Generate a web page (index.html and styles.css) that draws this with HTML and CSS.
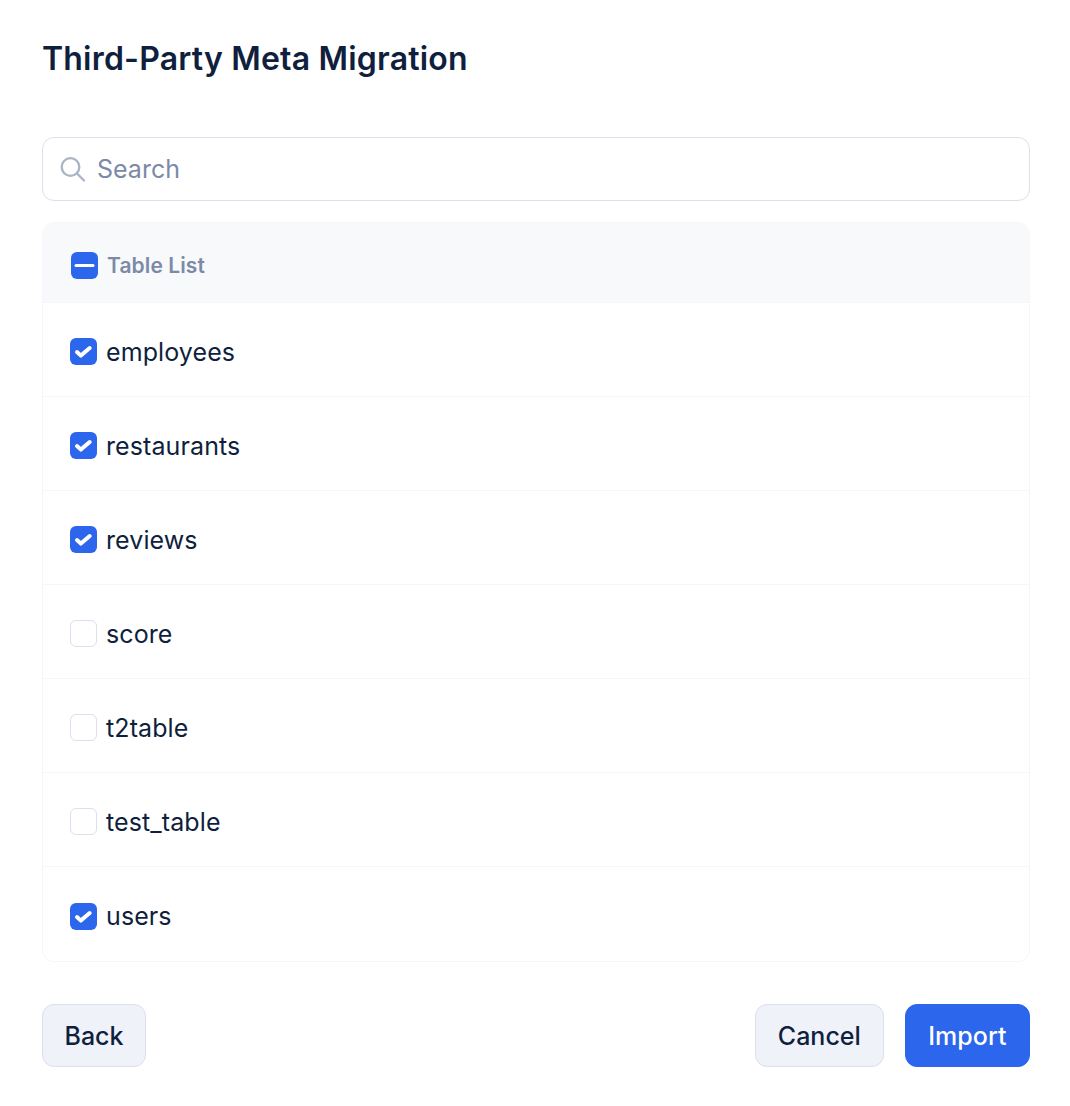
FILE: index.html
```html
<!DOCTYPE html>
<html lang="en">
<head>
  <meta charset="UTF-8">
  <title>Third-Party Meta Migration</title>
  <link rel="stylesheet" href="styles.css">
</head>
<body>
  <h1>Third-Party Meta Migration</h1>

  <label class="search">
    <svg class="search-icon" viewBox="0 0 25 25" width="25" height="25" fill="none" stroke="currentColor" stroke-width="2.3" stroke-linecap="round">
      <circle cx="10.5" cy="10" r="8.8"/>
      <path d="M17 16.5L24 23.5"/>
    </svg>
    <input type="text" placeholder="Search">
  </label>

  <div class="table">
    <div class="table-head">
      <span class="check on">
        <svg viewBox="0 0 27 27" width="27" height="27"><path d="M5 13.5h17" stroke="#fff" stroke-width="3" stroke-linecap="round"/></svg>
      </span>
      <span>Table List</span>
    </div>
    <div class="row">
      <span class="check on"><svg viewBox="0 0 27 27" width="27" height="27"><path d="M7 14l3.9 3.6 8.8-7.6" fill="none" stroke="#fff" stroke-width="4" stroke-linecap="round" stroke-linejoin="round"/></svg></span>
      <span>employees</span>
    </div>
    <div class="row">
      <span class="check on"><svg viewBox="0 0 27 27" width="27" height="27"><path d="M7 14l3.9 3.6 8.8-7.6" fill="none" stroke="#fff" stroke-width="4" stroke-linecap="round" stroke-linejoin="round"/></svg></span>
      <span>restaurants</span>
    </div>
    <div class="row">
      <span class="check on"><svg viewBox="0 0 27 27" width="27" height="27"><path d="M7 14l3.9 3.6 8.8-7.6" fill="none" stroke="#fff" stroke-width="4" stroke-linecap="round" stroke-linejoin="round"/></svg></span>
      <span>reviews</span>
    </div>
    <div class="row">
      <span class="check"></span>
      <span>score</span>
    </div>
    <div class="row">
      <span class="check"></span>
      <span>t2table</span>
    </div>
    <div class="row">
      <span class="check"></span>
      <span>test_table</span>
    </div>
    <div class="row">
      <span class="check on"><svg viewBox="0 0 27 27" width="27" height="27"><path d="M7 14l3.9 3.6 8.8-7.6" fill="none" stroke="#fff" stroke-width="4" stroke-linecap="round" stroke-linejoin="round"/></svg></span>
      <span>users</span>
    </div>
  </div>

  <div class="actions">
    <button class="btn back">Back</button>
    <div class="actions-right">
      <button class="btn">Cancel</button>
      <button class="btn primary">Import</button>
    </div>
  </div>
</body>
</html>
```

FILE: styles.css
```css
:root {
  --primary: #2b66ec;
  --text-dark: #0f1f3d;
  --muted: #7c8aa8;
  --border: #dcdfec;
  --row-line: #f5f6fa;
}

* {
  box-sizing: border-box;
}

body {
  margin: 0;
  padding: 38px 40px 39px 42px;
  background: #fff;
  color: var(--text-dark);
  font-family: Inter, "Liberation Sans", sans-serif;
}

h1 {
  margin: 0 0 57px;
  font-size: 32px;
  line-height: 42px;
  font-weight: 600;
  letter-spacing: 0.2px;
}

.search {
  display: flex;
  align-items: center;
  gap: 12px;
  height: 64px;
  padding: 0 17px;
  border: 1px solid var(--border);
  border-radius: 12px;
  margin-bottom: 21px;
}

.search-icon {
  flex: none;
  color: #aab2c5;
}

.search input {
  flex: 1;
  border: none;
  outline: none;
  padding: 0;
  font: 400 25px Inter, "Liberation Sans", sans-serif;
  color: var(--text-dark);
}

.search input::placeholder {
  color: var(--muted);
  opacity: 1;
}

.table {
  border: 1px solid var(--row-line);
  border-radius: 12px;
  overflow: hidden;
  margin-bottom: 42px;
}

.table-head {
  display: flex;
  align-items: center;
  gap: 9px;
  height: 80px;
  padding: 5px 0 0 28px;
  background: #f8f9fb;
  border-bottom: 1px solid var(--row-line);
  color: var(--muted);
  font-size: 21px;
  font-weight: 600;
  letter-spacing: 0.1px;
}

.row {
  display: flex;
  align-items: center;
  gap: 9px;
  height: 94px;
  padding: 4px 0 0 27px;
  border-bottom: 1px solid var(--row-line);
  font-size: 25px;
  letter-spacing: 0.1px;
}

.row:last-child {
  border-bottom: none;
}

.check {
  flex: none;
  width: 27px;
  height: 27px;
  border: 1px solid var(--border);
  border-radius: 6px;
  background: #fff;
}

.check svg {
  display: block;
}

.check.on {
  border: none;
  background: var(--primary);
}

.actions {
  display: flex;
  justify-content: space-between;
}

.actions-right {
  display: flex;
  gap: 21px;
}

.btn {
  height: 63px;
  padding: 0 22px;
  border: 1px solid var(--border);
  border-radius: 12px;
  background: #f0f2fa;
  color: var(--text-dark);
  font: 500 25px Inter, "Liberation Sans", sans-serif;
  cursor: pointer;
}

.btn.back {
  padding: 0 21.5px;
}

.btn.primary {
  padding: 0 22.5px;
  background: var(--primary);
  border-color: var(--primary);
  color: #fff;
}
```
